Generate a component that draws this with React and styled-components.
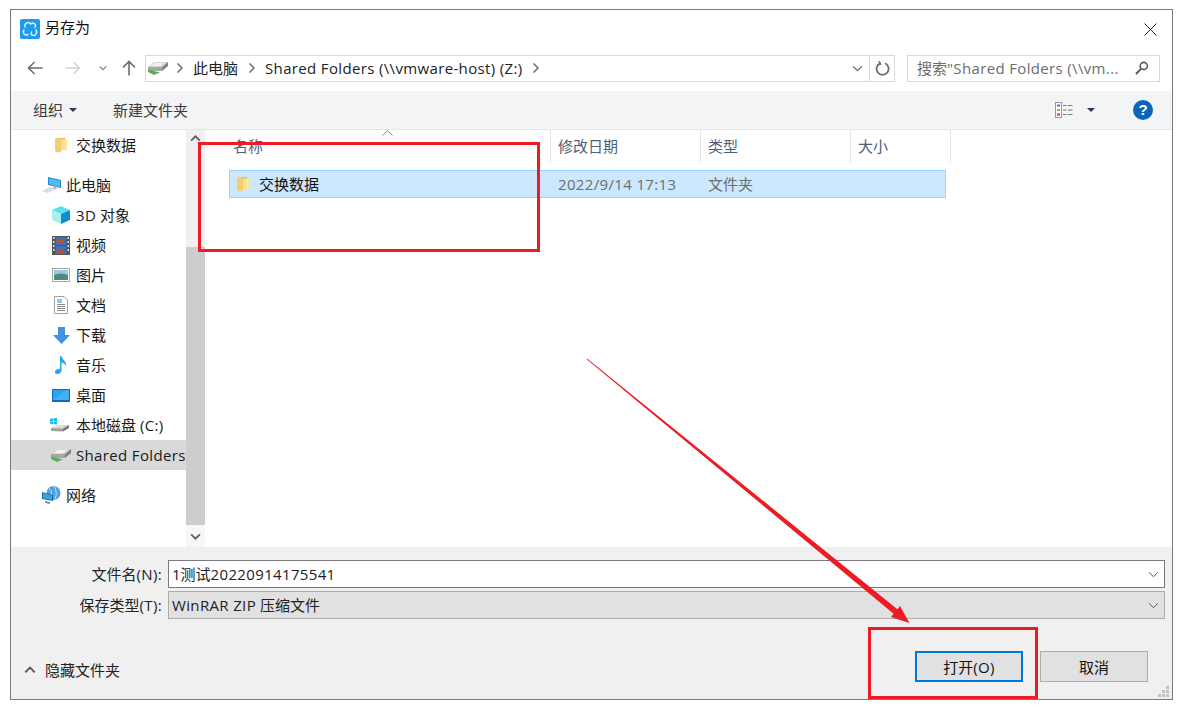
import React from "react";
import styled, { createGlobalStyle } from "styled-components";

const Global = createGlobalStyle`
  html, body { margin: 0; padding: 0; background: #fff; }
  body { font-family: "Open Sans", "Noto Sans CJK SC", sans-serif; font-size: 15px; color: #1a1a1a; }
  * { box-sizing: border-box; }
`;

const Stage = styled.div`
  position: relative; width: 1189px; height: 710px; padding: 9px 0 0 10px; overflow: hidden;
`;
const Window = styled.div`
  width: 1163px; height: 691px; border: 1px solid #7a7a7a; background: #fff;
  display: flex; flex-direction: column;
`;
const Latin = styled.span`letter-spacing: 0.35px;`;
const TitleBar = styled.div`
  height: 35px; display: flex; align-items: center; padding: 3px 15px 0 9px; flex: none;
`;
const TitleText = styled.span`margin-left: 5px; flex: 1; line-height: 20px; color: #111; position: relative; top: -2px;`;
const NavBar = styled.div`
  height: 46px; flex: none; display: flex; align-items: center; padding: 0 12px 0 16px;
`;
const NavArrow = styled.div`
  width: ${p => p.$w}px; margin-right: ${p => p.$mr || 0}px; margin-left: ${p => p.$ml || 0}px; display: flex; flex: none; justify-content: center;
  & > svg { flex: none; }
`;
const AddressBox = styled.div`
  width: 750px; height: 27px; margin-left: 9px; border: 1px solid #d9d9d9; display: flex; align-items: center; padding-left: 2px; flex: none;
`;
const Crumbs = styled.div`display: flex; align-items: center; flex: 1; min-width: 0;`;
const Crumb = styled.span`color: #222; margin: 0 11px; white-space: nowrap; line-height: 20px;`;
const AddressDrop = styled.div`width: 24px; height: 25px; display: flex; align-items: center; justify-content: center; border-right: 1px solid #d9d9d9; flex: none;`;
const AddressRefresh = styled.div`width: 24px; display: flex; justify-content: center; flex: none;`;
const SearchBox = styled.div`
  width: 253px; height: 27px; margin-left: 12px; border: 1px solid #d9d9d9; display: flex; align-items: center; padding: 0 10px 0 9px; flex: none;
  justify-content: space-between;
`;
const SearchText = styled.span`color: #6d6d6d; white-space: nowrap; line-height: 20px;`;
const Toolbar = styled.div`
  height: 39px; flex: none; background: #f3f4f6; border-bottom: 1px solid #e6e6e6; display: flex; align-items: center; padding: 0 19px 0 22px;
`;
const ToolLabel = styled.span`color: #3b3b3b; line-height: 20px;`;
const Caret = styled.span`
  width: 0; height: 0; border-left: 4px solid transparent; border-right: 4px solid transparent; border-top: 4px solid #2b3a55;
  margin-left: ${p => p.$ml}px; margin-right: ${p => p.$mr}px; flex: none;
`;
const Spacer = styled.div`flex: 1;`;
const HelpDot = styled.div`
  width: 20px; height: 20px; border-radius: 50%; background: #0b66b7; color: #fff; font: bold 15px/20px "Liberation Sans", sans-serif; text-align: center; flex: none;
`;
const Main = styled.div`flex: 1; min-height: 0; display: flex;`;
const NavPane = styled.div`width: 175px; flex: none; overflow: hidden;`;
const NavRow = styled.div`
  height: 30px; display: flex; align-items: center; padding-left: ${p => p.$pad}px; margin-top: ${p => p.$gap || 0}px;
  background: ${p => p.$active ? "#d9d9d9" : "transparent"}; white-space: nowrap; overflow: hidden;
`;
const IconSlot = styled.span`
  width: ${p => p.$w}px; margin-right: ${p => p.$mr}px; height: 20px; display: flex; align-items: center; justify-content: center; flex: none;
`;
const NavText = styled.span`color: #1a1a1a; line-height: 20px;`;
const ScrollBar = styled.div`
  width: 19px; flex: none; background: #f0f0f0; display: flex; flex-direction: column;
`;
const ScrollEnd = styled.div`height: ${p => p.$h}px; display: flex; justify-content: center; align-items: center; flex: none; background: ${p => p.$bg || "transparent"};`;
const ScrollThumb = styled.div`flex: 1; background: #cdcdcd;`;
const Content = styled.div`flex: 1; min-width: 0; position: relative; padding-left: 24px;`;
const HeaderRow = styled.div`display: grid; grid-template-columns: 322px 150px 150px 100px; width: 722px; height: 33px;`;
const HeaderCell = styled.div`
  border-right: 1px solid #e5e5e5; padding-left: ${p => p.$pad || 7}px; padding-top: 6px; color: #4c607a; line-height: 20px;
`;
const SortMark = styled.svg`position: absolute; left: 177px; top: 0;`;
const FileRow = styled.div`
  display: grid; grid-template-columns: 322px 150px 150px 95px; width: 717px; height: 28px; margin-top: 7px;
  background: #cce8ff; border: 1px solid #99d1ff; align-items: center;
`;
const FileName = styled.div`display: flex; align-items: center; padding-left: 7px; color: #111; line-height: 20px;`;
const FileMeta = styled.div`color: #6d6d6d; padding-left: 6px; line-height: 20px;`;
const Footer = styled.div`
  height: 152px; flex: none; background: #f0f0f0; padding: 13px 7px 0 0; display: flex; flex-direction: column;
`;
const FieldRow = styled.div`display: flex; align-items: center; height: 28px; margin-bottom: 3px;`;
const FieldLabel = styled.label`width: 151px; text-align: right; color: #222; flex: none; line-height: 20px;`;
const FieldBox = styled.div`
  margin-left: 6px; flex: 1; height: 28px; display: flex; align-items: center; justify-content: space-between; padding: 0 5px 0 3px;
  border: 1px solid ${p => p.$combo ? "#adadad" : "#7a7a7a"}; background: ${p => p.$combo ? "#e1e1e1" : "#fff"};
  color: #222; line-height: 20px;
`;
const FooterBottom = styled.div`
  flex: 1; display: flex; align-items: flex-start; position: relative; padding: 29px 0 0 0;
`;
const HideToggle = styled.div`display: flex; align-items: center; gap: 9px; margin: 9px 0 0 13px; color: #222; line-height: 20px;`;
const DialogButton = styled.div`
  width: 108px; height: 31px; background: #e1e1e1; display: flex; align-items: center; justify-content: center; color: #111;
  border: ${p => p.$primary ? "2px solid #0078d7" : "1px solid #adadad"}; margin-left: ${p => p.$ml}px; margin-right: ${p => p.$mr || 0}px; flex: none; line-height: 20px;
`;
const Grip = styled.svg`position: absolute; right: -5px; bottom: 1px;`;
const RedBox = styled.div`
  position: absolute; left: ${p => p.$x}px; top: ${p => p.$y}px; width: ${p => p.$w}px; height: ${p => p.$h}px; border: 3px solid #ed1c24; pointer-events: none;
`;
const ArrowLayer = styled.svg`position: absolute; left: 0; top: 0; pointer-events: none;`;

const Drive = ({ w = 20 }) => (
  <svg width={w} height="15" viewBox="0 0 20 15">
    <path d="M0 6 L6 1 H20 L14 6 Z" fill="#d8d8d8" />
    <path d="M3 5 L7 2 H16 L12 5 Z" fill="#f2f2f2" />
    <path d="M0 6 H14 V10 H0 Z" fill="#a6a6a6" />
    <path d="M14 6 L20 1 V5 L14 10 Z" fill="#808080" />
    <path d="M0 8.5 L8 10.5 L12 11.5 L6 14 L0 11 Z" fill="#52b655" />
  </svg>
);
const Folder = ({ w = 12, h = 16 }) => (
  <svg width={w} height={h} viewBox="0 0 12 16">
    <defs>
      <linearGradient id="fd" x1="0" x2="1" y1="0" y2="0">
        <stop offset="0" stopColor="#f6d47c" />
        <stop offset="1" stopColor="#ffe9a8" />
      </linearGradient>
    </defs>
    <path d="M2 1 H10 V13 H2 Z" fill="#e8bd5c" />
    <path d="M3 2.5 H12 V13 H3 Z" fill="url(#fd)" />
    <path d="M0 1.5 L2.5 .5 L6 3 V15 L2.5 15.5 L0 14 Z" fill="#f3cf72" />
  </svg>
);
const Pc = () => (
  <svg width="20" height="18" viewBox="0 0 20 18">
    <path d="M6 1 L19 4 V12 L6 9 Z" fill="#1d8fdc" />
    <path d="M7 2.2 L18 4.8 V11 L7 8.2 Z" fill="#57b8f2" />
    <path d="M0 15 L8 11 L14 13 L6 17 Z" fill="#dcdcdc" />
    <path d="M12 11 L15 12 L14 13 L11 12 Z" fill="#9a9a9a" />
  </svg>
);
const Cube = () => (
  <svg width="18" height="18" viewBox="0 0 18 18">
    <path d="M9 0 L18 4 L9 8 L0 4 Z" fill="#5fe0ea" />
    <path d="M0 4 L9 8 V18 L0 14 Z" fill="#a9eef0" />
    <path d="M18 4 L9 8 V18 L18 14 Z" fill="#0f8ecb" />
  </svg>
);
const Film = () => (
  <svg width="18" height="19" viewBox="0 0 18 19">
    <rect width="18" height="19" fill="#555" />
    <rect x="3.5" y="1" width="11" height="8" fill="#3a6fc1" />
    <rect x="3.5" y="10" width="11" height="8" fill="#3a6fc1" />
    <path d="M6 4 H12 V8 H6 Z M6 13 H12 V17 H6 Z" fill="#b4562c" />
    <path d="M1 1 H2.5 V3 H1 Z M1 5 H2.5 V7 H1 Z M1 9 H2.5 V11 H1 Z M1 13 H2.5 V15 H1 Z M15.5 1 H17 V3 H15.5 Z M15.5 5 H17 V7 H15.5 Z M15.5 9 H17 V11 H15.5 Z M15.5 13 H17 V15 H15.5 Z" fill="#ddd" />
  </svg>
);
const Picture = () => (
  <svg width="18" height="14" viewBox="0 0 18 14">
    <rect width="18" height="14" fill="#a8a8a8" />
    <rect x="1" y="1" width="16" height="12" fill="#fff" />
    <rect x="2" y="2" width="14" height="5" fill="#9fc5e8" />
    <path d="M2 7 Q8 4 16 7 V12 H2 Z" fill="#4d8a7a" />
  </svg>
);
const Doc = () => (
  <svg width="14" height="18" viewBox="0 0 14 18">
    <path d="M.5 .5 H10 L13.5 4 V17.5 H.5 Z" fill="#fff" stroke="#a0a0a0" />
    <path d="M3 4 H8 M3 6 H8" stroke="#2e8bd8" strokeWidth="1.2" />
    <path d="M3 8.5 H11 M3 10.5 H11 M3 12.5 H11 M3 14.5 H11" stroke="#8c8c8c" />
  </svg>
);
const Download = () => (
  <svg width="17" height="17" viewBox="0 0 17 17">
    <path d="M5 0 H12 V8 H17 L8.5 17 L0 8 H5 Z" fill="#3d93dd" />
  </svg>
);
const Note = () => (
  <svg width="12" height="18" viewBox="0 0 12 18">
    <path d="M5 0 H6.5 C7 4 12 5 11 10 C10 8 8 6.5 6.5 6.5 V14.5 C6.5 16.5 4.5 18 2.5 18 C1 18 0 17 0 15.7 C0 14 2 12.5 5 13 Z" fill="#1ea7f0" />
  </svg>
);
const Desktop = () => (
  <svg width="18" height="13" viewBox="0 0 18 13">
    <rect width="18" height="13" rx=".5" fill="#0f6cbd" />
    <rect x="1" y="1" width="16" height="10" fill="#2aa5f2" />
    <path d="M1 11 L14 1 H17 V11 Z" fill="#58bcf5" opacity=".5" />
  </svg>
);
const DiskC = () => (
  <svg width="20" height="15" viewBox="0 0 20 15">
    <path d="M0 .8 L3 .4 V3 H0 Z M3.6 .3 L7 0 V3 H3.6 Z M0 3.6 H3 V6 L0 5.7 Z M3.6 3.6 H7 V6.4 L3.6 6 Z" fill="#11b5f0" />
    <path d="M1 10 L8 7 H19 L13 10.5 Z" fill="#dcdcdc" />
    <path d="M1 10 L13 10.5 V13.5 L1 13 Z" fill="#a0a0a0" />
    <path d="M13 10.5 L19 7 V10 L13 13.5 Z" fill="#777" />
  </svg>
);
const Net = () => (
  <svg width="20" height="18" viewBox="0 0 20 18">
    <circle cx="11.5" cy="7" r="7" fill="#4fa3dd" />
    <path d="M7 2 Q11 5 9 10 M12 0 Q16 6 13 13" stroke="#b8e0f7" fill="none" />
    <path d="M0 6 L11 9 V15 L0 13 Z" fill="#176ea8" />
    <path d="M1 7 L10 9.6 V14 L1 12.2 Z" fill="#3aa1e4" />
    <path d="M3 15 L8 16 V18 L3 17 Z" fill="#8a8a8a" />
  </svg>
);
const AppLogo = () => (
  <svg width="20" height="20" viewBox="0 0 20 20">
    <rect width="20" height="20" rx="2" fill="#1c9bef" />
    <path d="M5 8 C4 4 9 2 10.5 5 C13 3 17 5 15 8.5 M4 11 C2 14 5 17 8 15.5 M16 11 C18 14 15 17.5 12 16 C11 15.5 11 14 11.5 13" fill="none" stroke="#d6f0ff" strokeWidth="1.5" strokeLinecap="round" />
  </svg>
);
const Chevron = ({ size = 8, dir = "down", color = "#6b6b6b", sw = 1.3 }) => {
  const d = { down: "M1 3 L5 7 L9 3", up: "M1 7 L5 3 L9 7", right: "M2.5 .5 L7 5 L2.5 9.5" }[dir];
  return (
    <svg width={size} height={size} viewBox="0 0 10 10">
      <path d={d} fill="none" stroke={color} strokeWidth={sw * 10 / size} />
    </svg>
  );
};
const CrumbSep = ({ ml }) => (
  <NavArrow $w={5} $ml={ml}><Chevron size={10} dir="right" color="#707070" sw={1.5} /></NavArrow>
);
const LineArrow = ({ dir, color }) => (
  <svg width="16" height="14" viewBox="0 0 16 14">
    <path d={dir === "left" ? "M15.5 7 H1.5 M7.5 1 L1.5 7 L7.5 13" : "M.5 7 H14.5 M8.5 1 L14.5 7 L8.5 13"} fill="none" stroke={color} strokeWidth="1.6" />
  </svg>
);
const UpArrow = () => (
  <svg width="14" height="16" viewBox="0 0 14 16">
    <path d="M7 15.5 V1.5 M1 7.5 L7 1.5 L13 7.5" fill="none" stroke="#6b6b6b" strokeWidth="1.6" />
  </svg>
);
const Refresh = () => (
  <svg width="15" height="15" viewBox="0 0 15 15">
    <path d="M5.2 2.3 A6 6 0 1 0 10 2.3" fill="none" stroke="#6d6d6d" strokeWidth="1.8" />
    <path d="M4 0 L5.6 3 L2.6 4" fill="none" stroke="#6d6d6d" strokeWidth="1.5" />
  </svg>
);
const SearchIcon = () => (
  <svg width="14" height="14" viewBox="0 0 14 14">
    <circle cx="8.8" cy="5" r="3.6" fill="none" stroke="#5a5a5a" strokeWidth="1.6" />
    <path d="M6.2 7.6 L1 13" stroke="#5a5a5a" strokeWidth="2" />
  </svg>
);
const ViewIcon = () => (
  <svg width="18" height="16" viewBox="0 0 18 16">
    <rect x=".5" y=".5" width="6" height="15" fill="#fff" stroke="#9a9a9a" />
    <rect x="2" y="2.5" width="3" height="2" fill="#3b78c4" />
    <rect x="2" y="7" width="3" height="2" fill="#b99a3c" />
    <rect x="2" y="11.5" width="3" height="2" fill="#c8352b" />
    <path d="M8 3.5 H11.5 M13 3.5 H17.5 M8 8 H11.5 M13 8 H17.5 M8 12.5 H11.5 M13 12.5 H17.5" stroke="#777" />
  </svg>
);
const CloseX = () => (
  <svg width="13" height="13" viewBox="0 0 13 13">
    <path d="M.5 .5 L12.5 12.5 M12.5 .5 L.5 12.5" stroke="#222" strokeWidth="1" />
  </svg>
);

const navItems = [
  { t: "此电脑", I: Pc, pad: 31, w: 20, mr: 4, gap: 10 },
  { t: <><Latin>3D</Latin> 对象</>, key: "3d", I: Cube },
  { t: "视频", I: Film },
  { t: "图片", I: Picture },
  { t: "文档", I: Doc },
  { t: "下载", I: Download },
  { t: "音乐", I: Note },
  { t: "桌面", I: Desktop },
  { t: <>本地磁盘 <Latin>(C:)</Latin></>, key: "c", I: DiskC, pad: 39, w: 20, mr: 6 },
  { t: <Latin>Shared Folders</Latin>, key: "z", I: Drive, active: true, pad: 40, w: 20, mr: 5 },
  { t: "网络", I: Net, pad: 31, w: 20, mr: 4, gap: 10 },
];

export default function App() {
  return (
    <Stage>
      <Global />
      <Window>
        <TitleBar>
          <AppLogo />
          <TitleText>另存为</TitleText>
          <CloseX />
        </TitleBar>
        <NavBar>
          <NavArrow $w={15} $mr={23}><LineArrow dir="left" color="#6d6d6d" /></NavArrow>
          <NavArrow $w={15} $mr={19}><LineArrow dir="right" color="#d4d4d4" /></NavArrow>
          <NavArrow $w={8} $mr={15}><Chevron size={8} color="#808080" /></NavArrow>
          <NavArrow $w={14}><UpArrow /></NavArrow>
          <AddressBox>
            <Crumbs>
              <Drive />
              <CrumbSep ml={9} />
              <Crumb>此电脑</Crumb>
              <CrumbSep />
              <Crumb><Latin>Shared Folders (\\vmware-host) (Z:)</Latin></Crumb>
              <CrumbSep />
            </Crumbs>
            <AddressDrop><Chevron size={11} color="#666" sw={1.2} /></AddressDrop>
            <AddressRefresh><Refresh /></AddressRefresh>
          </AddressBox>
          <SearchBox>
            <SearchText>搜索<Latin>"Shared Folders (\\vm...</Latin></SearchText>
            <SearchIcon />
          </SearchBox>
        </NavBar>
        <Toolbar>
          <ToolLabel>组织</ToolLabel>
          <Caret $ml={6} $mr={36} />
          <ToolLabel>新建文件夹</ToolLabel>
          <Spacer />
          <ViewIcon />
          <Caret $ml={14} $mr={38} />
          <HelpDot>?</HelpDot>
        </Toolbar>
        <Main>
          <NavPane>
            <NavRow $pad={41}>
              <IconSlot $w={18} $mr={6}><Folder /></IconSlot>
              <NavText>交换数据</NavText>
            </NavRow>
            {navItems.map(({ t, key, I, pad = 41, w = 18, mr = 6, gap, active }) => (
              <NavRow key={key || t} $pad={pad} $gap={gap} $active={active}>
                <IconSlot $w={w} $mr={mr}><I /></IconSlot>
                <NavText>{t}</NavText>
              </NavRow>
            ))}
          </NavPane>
          <ScrollBar>
            <ScrollEnd $h={17}><Chevron size={11} dir="up" color="#606060" sw={1.8} /></ScrollEnd>
            <ScrollEnd $h={100} />
            <ScrollThumb />
            <ScrollEnd $h={22} $bg="#f7f7f7"><Chevron size={11} color="#606060" sw={1.8} /></ScrollEnd>
          </ScrollBar>
          <Content>
            <SortMark width="11" height="6" viewBox="0 0 11 6"><path d="M.5 5.5 L5.5 .8 L10.5 5.5" fill="none" stroke="#8a8a8a" /></SortMark>
            <HeaderRow>
              <HeaderCell $pad={4}>名称</HeaderCell>
              <HeaderCell>修改日期</HeaderCell>
              <HeaderCell>类型</HeaderCell>
              <HeaderCell>大小</HeaderCell>
            </HeaderRow>
            <FileRow>
              <FileName><IconSlot $w={12} $mr={10}><Folder /></IconSlot>交换数据</FileName>
              <FileMeta><Latin>2022/9/14 17:13</Latin></FileMeta>
              <FileMeta>文件夹</FileMeta>
              <FileMeta />
            </FileRow>
          </Content>
        </Main>
        <Footer>
          <FieldRow>
            <FieldLabel>文件名<Latin>(N):</Latin></FieldLabel>
            <FieldBox><span>1测试<Latin>20220914175541</Latin></span><Chevron size={11} color="#555" sw={1} /></FieldBox>
          </FieldRow>
          <FieldRow>
            <FieldLabel>保存类型<Latin>(T):</Latin></FieldLabel>
            <FieldBox $combo><span><Latin>WinRAR ZIP</Latin> 压缩文件</span><Chevron size={11} color="#555" sw={1} /></FieldBox>
          </FieldRow>
          <FooterBottom>
            <HideToggle>
              <Chevron size={12} dir="up" color="#555" sw={1.8} />
              隐藏文件夹
            </HideToggle>
            <Spacer />
            <DialogButton $primary $ml={0}>打开<Latin>(O)</Latin></DialogButton>
            <DialogButton $ml={17} $mr={17}>取消</DialogButton>
            <Grip width="12" height="12" viewBox="0 0 12 12">
              <path d="M8 0 H11 V3 H8 Z M4 4 H7 V7 H4 Z M8 4 H11 V7 H8 Z M0 8 H3 V11 H0 Z M4 8 H7 V11 H4 Z M8 8 H11 V11 H8 Z" fill="#c4c4c4" />
            </Grip>
          </FooterBottom>
        </Footer>
      </Window>
      <RedBox $x={198} $y={142} $w={342} $h={110} />
      <RedBox $x={868} $y={627} $w={170} $h={72} />
      <ArrowLayer width="1189" height="710" viewBox="0 0 1189 710">
        <polygon points="587,358.5 897.4,609.2 900,606 909.5,623 891,617 893.6,613.8 586.6,359.2" fill="#ed1c24" />
      </ArrowLayer>
    </Stage>
  );
}
